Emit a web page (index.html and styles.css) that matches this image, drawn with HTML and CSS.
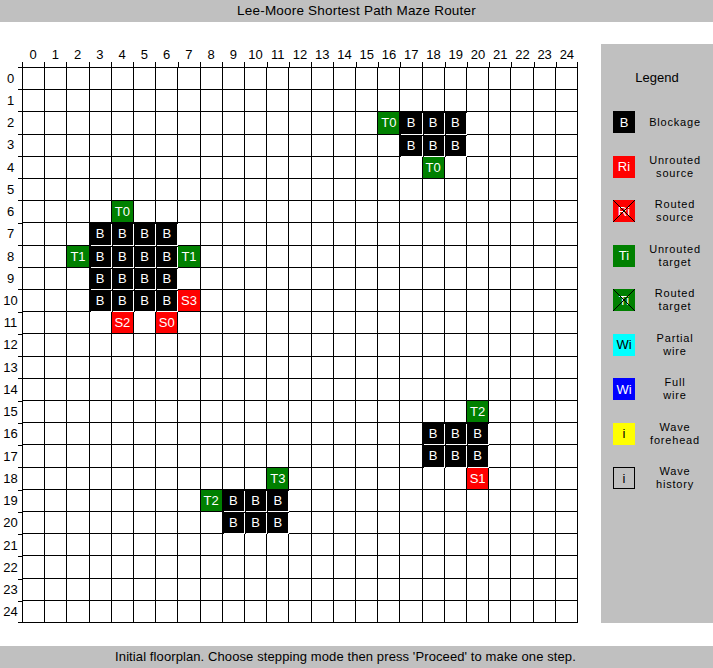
FILE: index.html
```html
<!DOCTYPE html>
<html>
<head>
<meta charset="utf-8">
<title>Lee-Moore Shortest Path Maze Router</title>
<link rel="stylesheet" href="styles.css">
</head>
<body>
<div class="app">
  <header class="bar title">Lee-Moore Shortest Path Maze Router</header>
  <main class="main">
    <section class="plot">
      <div class="cols">
        <span>0</span><span>1</span><span>2</span><span>3</span><span>4</span><span>5</span><span>6</span><span>7</span><span>8</span><span>9</span><span>10</span><span>11</span><span>12</span><span>13</span><span>14</span><span>15</span><span>16</span><span>17</span><span>18</span><span>19</span><span>20</span><span>21</span><span>22</span><span>23</span><span>24</span>
      </div>
      <div class="body">
        <div class="rows">
          <span>0</span><span>1</span><span>2</span><span>3</span><span>4</span><span>5</span><span>6</span><span>7</span><span>8</span><span>9</span><span>10</span><span>11</span><span>12</span><span>13</span><span>14</span><span>15</span><span>16</span><span>17</span><span>18</span><span>19</span><span>20</span><span>21</span><span>22</span><span>23</span><span>24</span>
        </div>
        <div class="board">
<i></i><i></i><i></i><i></i><i></i><i></i><i></i><i></i><i></i><i></i><i></i><i></i><i></i><i></i><i></i><i></i><i></i><i></i><i></i><i></i><i></i><i></i><i></i><i></i><i></i>
<i></i><i></i><i></i><i></i><i></i><i></i><i></i><i></i><i></i><i></i><i></i><i></i><i></i><i></i><i></i><i></i><i></i><i></i><i></i><i></i><i></i><i></i><i></i><i></i><i></i>
<i></i><i></i><i></i><i></i><i></i><i></i><i></i><i></i><i></i><i></i><i></i><i></i><i></i><i></i><i></i><i></i><b class="t">T0</b><b class="k">B</b><b class="k">B</b><b class="k">B</b><i></i><i></i><i></i><i></i><i></i>
<i></i><i></i><i></i><i></i><i></i><i></i><i></i><i></i><i></i><i></i><i></i><i></i><i></i><i></i><i></i><i></i><i></i><b class="k">B</b><b class="k">B</b><b class="k">B</b><i></i><i></i><i></i><i></i><i></i>
<i></i><i></i><i></i><i></i><i></i><i></i><i></i><i></i><i></i><i></i><i></i><i></i><i></i><i></i><i></i><i></i><i></i><i></i><b class="t">T0</b><i></i><i></i><i></i><i></i><i></i><i></i>
<i></i><i></i><i></i><i></i><i></i><i></i><i></i><i></i><i></i><i></i><i></i><i></i><i></i><i></i><i></i><i></i><i></i><i></i><i></i><i></i><i></i><i></i><i></i><i></i><i></i>
<i></i><i></i><i></i><i></i><b class="t">T0</b><i></i><i></i><i></i><i></i><i></i><i></i><i></i><i></i><i></i><i></i><i></i><i></i><i></i><i></i><i></i><i></i><i></i><i></i><i></i><i></i>
<i></i><i></i><i></i><b class="k">B</b><b class="k">B</b><b class="k">B</b><b class="k">B</b><i></i><i></i><i></i><i></i><i></i><i></i><i></i><i></i><i></i><i></i><i></i><i></i><i></i><i></i><i></i><i></i><i></i><i></i>
<i></i><i></i><b class="t">T1</b><b class="k">B</b><b class="k">B</b><b class="k">B</b><b class="k">B</b><b class="t">T1</b><i></i><i></i><i></i><i></i><i></i><i></i><i></i><i></i><i></i><i></i><i></i><i></i><i></i><i></i><i></i><i></i><i></i>
<i></i><i></i><i></i><b class="k">B</b><b class="k">B</b><b class="k">B</b><b class="k">B</b><i></i><i></i><i></i><i></i><i></i><i></i><i></i><i></i><i></i><i></i><i></i><i></i><i></i><i></i><i></i><i></i><i></i><i></i>
<i></i><i></i><i></i><b class="k">B</b><b class="k">B</b><b class="k">B</b><b class="k">B</b><b class="s">S3</b><i></i><i></i><i></i><i></i><i></i><i></i><i></i><i></i><i></i><i></i><i></i><i></i><i></i><i></i><i></i><i></i><i></i>
<i></i><i></i><i></i><i></i><b class="s">S2</b><i></i><b class="s">S0</b><i></i><i></i><i></i><i></i><i></i><i></i><i></i><i></i><i></i><i></i><i></i><i></i><i></i><i></i><i></i><i></i><i></i><i></i>
<i></i><i></i><i></i><i></i><i></i><i></i><i></i><i></i><i></i><i></i><i></i><i></i><i></i><i></i><i></i><i></i><i></i><i></i><i></i><i></i><i></i><i></i><i></i><i></i><i></i>
<i></i><i></i><i></i><i></i><i></i><i></i><i></i><i></i><i></i><i></i><i></i><i></i><i></i><i></i><i></i><i></i><i></i><i></i><i></i><i></i><i></i><i></i><i></i><i></i><i></i>
<i></i><i></i><i></i><i></i><i></i><i></i><i></i><i></i><i></i><i></i><i></i><i></i><i></i><i></i><i></i><i></i><i></i><i></i><i></i><i></i><i></i><i></i><i></i><i></i><i></i>
<i></i><i></i><i></i><i></i><i></i><i></i><i></i><i></i><i></i><i></i><i></i><i></i><i></i><i></i><i></i><i></i><i></i><i></i><i></i><i></i><b class="t">T2</b><i></i><i></i><i></i><i></i>
<i></i><i></i><i></i><i></i><i></i><i></i><i></i><i></i><i></i><i></i><i></i><i></i><i></i><i></i><i></i><i></i><i></i><i></i><b class="k">B</b><b class="k">B</b><b class="k">B</b><i></i><i></i><i></i><i></i>
<i></i><i></i><i></i><i></i><i></i><i></i><i></i><i></i><i></i><i></i><i></i><i></i><i></i><i></i><i></i><i></i><i></i><i></i><b class="k">B</b><b class="k">B</b><b class="k">B</b><i></i><i></i><i></i><i></i>
<i></i><i></i><i></i><i></i><i></i><i></i><i></i><i></i><i></i><i></i><i></i><b class="t">T3</b><i></i><i></i><i></i><i></i><i></i><i></i><i></i><i></i><b class="s">S1</b><i></i><i></i><i></i><i></i>
<i></i><i></i><i></i><i></i><i></i><i></i><i></i><i></i><b class="t">T2</b><b class="k">B</b><b class="k">B</b><b class="k">B</b><i></i><i></i><i></i><i></i><i></i><i></i><i></i><i></i><i></i><i></i><i></i><i></i><i></i>
<i></i><i></i><i></i><i></i><i></i><i></i><i></i><i></i><i></i><b class="k">B</b><b class="k">B</b><b class="k">B</b><i></i><i></i><i></i><i></i><i></i><i></i><i></i><i></i><i></i><i></i><i></i><i></i><i></i>
<i></i><i></i><i></i><i></i><i></i><i></i><i></i><i></i><i></i><i></i><i></i><i></i><i></i><i></i><i></i><i></i><i></i><i></i><i></i><i></i><i></i><i></i><i></i><i></i><i></i>
<i></i><i></i><i></i><i></i><i></i><i></i><i></i><i></i><i></i><i></i><i></i><i></i><i></i><i></i><i></i><i></i><i></i><i></i><i></i><i></i><i></i><i></i><i></i><i></i><i></i>
<i></i><i></i><i></i><i></i><i></i><i></i><i></i><i></i><i></i><i></i><i></i><i></i><i></i><i></i><i></i><i></i><i></i><i></i><i></i><i></i><i></i><i></i><i></i><i></i><i></i>
<i></i><i></i><i></i><i></i><i></i><i></i><i></i><i></i><i></i><i></i><i></i><i></i><i></i><i></i><i></i><i></i><i></i><i></i><i></i><i></i><i></i><i></i><i></i><i></i><i></i>
        </div>
      </div>
    </section>
    <aside class="legend">
      <div class="legend-title">Legend</div>
      <div class="item"><span class="sw k">B</span><span class="lbl">Blockage</span></div>
      <div class="item"><span class="sw s">Ri</span><span class="lbl">Unrouted<br>source</span></div>
      <div class="item"><span class="sw s x">Ri<svg viewBox="0 0 22 22"><path d="M0 0L22 22M22 0L0 22" stroke="#000" stroke-width="1"/></svg></span><span class="lbl">Routed<br>source</span></div>
      <div class="item"><span class="sw t">Ti</span><span class="lbl">Unrouted<br>target</span></div>
      <div class="item"><span class="sw t x">Ti<svg viewBox="0 0 22 22"><path d="M0 0L22 22M22 0L0 22" stroke="#000" stroke-width="1"/></svg></span><span class="lbl">Routed<br>target</span></div>
      <div class="item"><span class="sw pw">Wi</span><span class="lbl">Partial<br>wire</span></div>
      <div class="item"><span class="sw fw">Wi</span><span class="lbl">Full<br>wire</span></div>
      <div class="item"><span class="sw wf">i</span><span class="lbl">Wave<br>forehead</span></div>
      <div class="item"><span class="sw wh">i</span><span class="lbl">Wave<br>history</span></div>
    </aside>
  </main>
  <footer class="bar status">Initial floorplan. Choose stepping mode then press 'Proceed' to make one step.</footer>
</div>
</body>
</html>
```
FILE: styles.css
```css
html, body {
  margin: 0;
  padding: 0;
  background: #fff;
}
.app {
  width: 713px;
  height: 668px;
  display: flex;
  flex-direction: column;
  font-family: "Liberation Sans", Arial, sans-serif;
  font-size: 13px;
  color: #000;
}
.bar {
  height: 22px;
  line-height: 22px;
  background: #c0c0c0;
  text-align: center;
  flex: none;
  white-space: nowrap;
  box-sizing: border-box;
}
.title {
  font-size: 13.5px;
  letter-spacing: 0.2px;
}
.status {
  font-size: 13px;
  letter-spacing: 0.1px;
  padding-right: 22px;
}
.main {
  flex: 1;
  display: flex;
  align-items: flex-start;
}
.plot {
  width: 578px;
  display: flex;
  flex-direction: column;
}
.cols {
  margin: 24px 0 0 22px;
  width: 556px;
  height: 21px;
  display: grid;
  grid-template-columns: repeat(25, 1fr);
}
.cols span {
  text-align: center;
  line-height: 18px;
  background: linear-gradient(#000, #000) no-repeat left bottom / 1px 5px;
}
.cols span:last-child {
  background:
    linear-gradient(#000, #000) no-repeat left bottom / 1px 5px,
    linear-gradient(#000, #000) no-repeat right bottom / 1px 5px;
}
.body {
  display: flex;
}
.rows {
  width: 22px;
  height: 556px;
  display: grid;
  grid-template-rows: repeat(25, 1fr);
}
.rows span {
  display: flex;
  align-items: center;
  justify-content: center;
  padding-right: 1px;
  background: linear-gradient(#000, #000) no-repeat right top / 4px 1px;
}
.rows span:last-child {
  background:
    linear-gradient(#000, #000) no-repeat right top / 4px 1px,
    linear-gradient(#000, #000) no-repeat right bottom / 4px 1px;
}
.board {
  width: 556px;
  height: 556px;
  box-sizing: border-box;
  padding: 1px;
  gap: 1px;
  background: #000;
  display: grid;
  grid-template-columns: repeat(25, 1fr);
  grid-template-rows: repeat(25, 1fr);
}
.board i {
  background: #fff;
}
.board b {
  font-weight: normal;
  display: flex;
  align-items: center;
  justify-content: center;
  color: #fff;
}
.k { background: #000; }
.board .k { box-shadow: 1px 1px 0 #fff; }
.t { background: #008000; }
.s { background: #ff0000; }

.legend {
  margin: 22px 0 0 23px;
  width: 112px;
  height: 579px;
  background: #c0c0c0;
  display: flex;
  flex-direction: column;
}
.legend-title {
  height: 55.75px;
  line-height: 67px;
  text-align: center;
}
.item {
  height: 44.5px;
  display: flex;
  align-items: center;
}
.sw {
  width: 22px;
  height: 22px;
  margin-left: 12px;
  display: flex;
  align-items: center;
  justify-content: center;
  color: #fff;
  position: relative;
  box-sizing: border-box;
  flex: none;
}
.sw svg {
  position: absolute;
  inset: 0;
  width: 22px;
  height: 22px;
}
.pw { background: #00ffff; color: #000; }
.fw { background: #0000ff; color: #fff; }
.wf { background: #ffff00; color: #000; }
.wh { border: 1px solid #000; color: #000; }
.lbl {
  flex: 1;
  text-align: center;
  font-size: 11px;
  letter-spacing: 0.8px;
  line-height: 13px;
  padding-right: 2px;
  margin-left: 4px;
}
```
